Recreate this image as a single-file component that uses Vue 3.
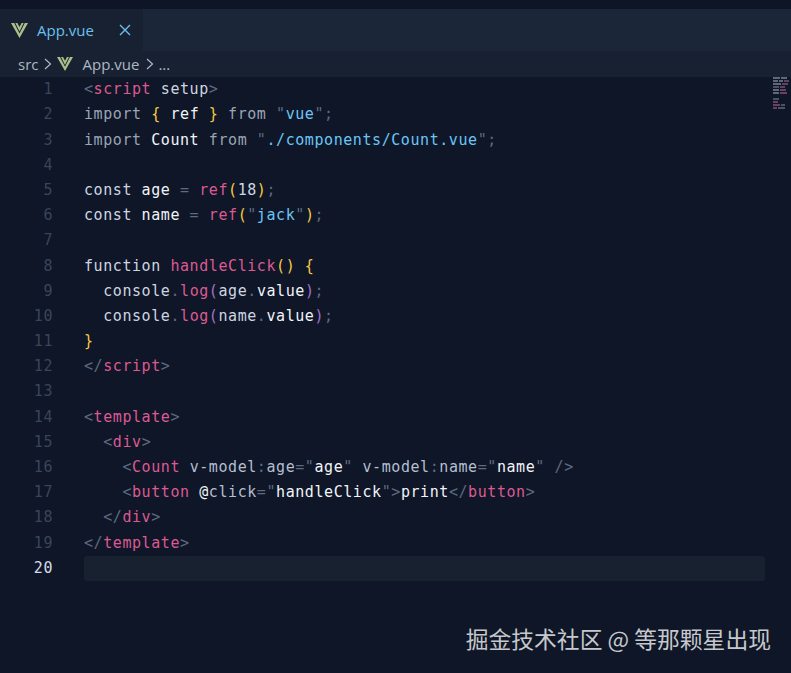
<script setup>
const P = 'p', T = 't', K = 'k', W = 'w', S = 's', Y = 'y', C = 'c', A = 'a', M = 'm'
const lines = [
  [[P,'<'],[T,'script'],[C,' setup'],[P,'>']],
  [[K,'import '],[Y,'{'],[W,' ref '],[Y,'}'],[K,' from '],[P,'"'],[S,'vue'],[P,'"'],[P,';']],
  [[K,'import '],[W,'Count'],[K,' from '],[P,'"'],[S,'./components/Count.vue'],[P,'"'],[P,';']],
  [],
  [[C,'const '],[W,'age'],[P,' = '],[T,'ref'],[Y,'('],[C,'18'],[Y,')'],[P,';']],
  [[C,'const '],[W,'name'],[P,' = '],[T,'ref'],[Y,'('],[P,'"'],[S,'jack'],[P,'"'],[Y,')'],[P,';']],
  [],
  [[C,'function '],[T,'handleClick'],[Y,'() {']],
  [[C,'  console'],[P,'.'],[T,'log'],[M,'('],[C,'age'],[P,'.'],[W,'value'],[M,')'],[P,';']],
  [[C,'  console'],[P,'.'],[T,'log'],[M,'('],[C,'name'],[P,'.'],[W,'value'],[M,')'],[P,';']],
  [[Y,'}']],
  [[P,'</'],[T,'script'],[P,'>']],
  [],
  [[P,'<'],[T,'template'],[P,'>']],
  [[P,'  <'],[T,'div'],[P,'>']],
  [[P,'    <'],[T,'Count'],[A,' v-model'],[P,':'],[A,'age'],[P,'="'],[W,'age'],[P,'"'],[A,' v-model'],[P,':'],[A,'name'],[P,'="'],[W,'name'],[P,'"'],[P,' />']],
  [[P,'    <'],[T,'button'],[W,' @'],[A,'click'],[P,'="'],[W,'handleClick'],[P,'"'],[P,'>'],[W,'print'],[P,'</'],[T,'button'],[P,'>']],
  [[P,'  </'],[T,'div'],[P,'>']],
  [[P,'</'],[T,'template'],[P,'>']],
  [],
]
const mini = [
  [['#5f6878',7],['#5f6878',6]],
  [['#5f6878',5],['#5f6878',4],['#5d4560',5]],
  [['#5f6878',8],['#5d4560',6]],
  [['#4a5364',6],['#5d4560',5]],
  [['#5f6878',6],['#6d3f62',6]],
  [['#5f6878',6],['#6d3f62',7]],
  [],
  [['#4a5364',6]],
  [['#6d3f62',5]],
  [['#6d3f62',7],['#4a5364',4]],
  [['#6d3f62',4],['#4a5364',7]],
]
</script>

<template>
  <div class="window">
    <div class="titlebar"></div>
    <div class="tabbar">
      <div class="tab">
        <svg class="vue" viewBox="0 0 20 18" width="19" height="17">
          <path d="M1 1h3.4L10 12.2 15.6 1H19L10 17Z" fill="#a9c08a"/>
          <path d="M5.6 1h2.2L10 5.4 12.2 1h2.2L10 10Z" fill="#a9c08a"/>
        </svg>
        <span class="tabname">App.vue</span>
        <svg class="close" viewBox="0 0 12 12" width="12" height="12">
          <path d="M1 1l10 10M11 1L1 11" stroke="#6cc0f0" stroke-width="1.4" fill="none"/>
        </svg>
      </div>
    </div>
    <div class="crumbs">
      <span>src</span>
      <svg class="chev" viewBox="0 0 8 12" width="8" height="12"><path d="M1 1l5.5 5L1 11" stroke="#aeb7c4" stroke-width="1.2" fill="none"/></svg>
      <svg class="vue small" viewBox="0 0 20 18" width="18" height="16">
        <path d="M1 1h3.4L10 12.2 15.6 1H19L10 17Z" fill="#a9c08a"/>
        <path d="M5.6 1h2.2L10 5.4 12.2 1h2.2L10 10Z" fill="#a9c08a"/>
      </svg>
      <span class="crumbfile">App.vue</span>
      <svg class="chev" viewBox="0 0 8 12" width="8" height="12"><path d="M1 1l5.5 5L1 11" stroke="#aeb7c4" stroke-width="1.2" fill="none"/></svg>
      <span class="dots">...</span>
    </div>
    <div class="editor">
      <div v-for="(line, i) in lines" :key="i" class="line" :class="{ current: i === 19 }">
        <span class="num">{{ i + 1 }}</span>
        <span class="code"><span v-for="(tok, j) in line" :key="j" :class="tok[0]">{{ tok[1] }}</span></span>
      </div>
      <div class="minimap">
        <div v-for="(row, i) in mini" :key="i" class="minirow">
          <i v-for="(b, j) in row" :key="j" :style="{ background: b[0], width: b[1] + 'px' }"></i>
        </div>
      </div>
    </div>
    <div class="watermark">掘金技术社区 @ 等那颗星出现</div>
  </div>
</template>

<style>
html, body { margin: 0; background: #0e1627; }
</style>

<style scoped>
.window {
  position: relative;
  width: 791px;
  height: 673px;
  overflow: hidden;
  background: #0e1627;
  display: flex;
  flex-direction: column;
  font-family: "Open Sans", "Noto Sans", sans-serif;
}
.titlebar { height: 9px; background: #0d1526; flex: none; }
.tabbar { height: 42px; background: #1b2738; flex: none; display: flex; }
.tab {
  width: 143px;
  background: #172131;
  display: flex;
  align-items: center;
  box-sizing: border-box;
  padding: 0 12px 0 10px;
}
.vue { flex: none; }
.tabname { margin-left: 8px; font-size: 15px; color: #6cc0f0; flex: 1; }
.crumbs {
  height: 26px;
  flex: none;
  background: #172131;
  display: flex;
  align-items: center;
  padding-left: 18px;
  color: #aeb7c4;
  font-size: 15px;
}
.chev { margin: 0 3px 0 6px; flex: none; }
.small { margin: 0 8px 0 1px; }
.crumbfile { margin-right: 1px; }
.dots { margin-left: 1px; }
.editor {
  position: relative;
  flex: 1;
  padding-top: 0.2px;
  font-family: "DejaVu Sans Mono", "Liberation Mono", monospace;
  font-size: 15px;
  letter-spacing: 0.57px;
}
.line {
  height: 25.2px;
  line-height: 25.2px;
  display: flex;
  white-space: pre;
}
.num {
  width: 53px;
  text-align: right;
  color: #39455a;
  flex: none;
}
.current .num { color: #d5dbe6; }
.code {
  margin-left: 31px;
  width: 681px;
  border-radius: 3px;
}
.current .code { background: #172130; }
.p { color: #5d6a80; }
.t { color: #dc5a92; }
.k { color: #9aa5b5; }
.w { color: #f1f4f8; }
.c { color: #cdd5e1; }
.s { color: #6cc5f5; }
.y { color: #f6ca45; }
.a { color: #b4bfd0; }
.m { color: #a771c9; }
.minimap {
  position: absolute;
  top: 0;
  left: 773px;
  display: flex;
  flex-direction: column;
  gap: 1px;
}
.minirow { height: 2px; display: flex; gap: 1px; }
.minirow i { display: block; height: 2px; }
.watermark {
  position: absolute;
  right: 20px;
  top: 624px;
  font-family: "Noto Sans CJK SC", "Noto Sans", sans-serif;
  font-size: 22.8px;
  line-height: 30px;
  color: #c6c8cc;
  white-space: nowrap;
}
</style>
